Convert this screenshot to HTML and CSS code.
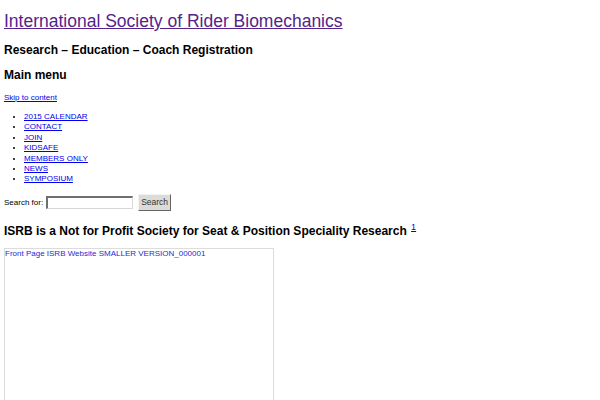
FILE: index.html
```html
<!DOCTYPE html>
<html lang="en">
<head>
  <meta charset="UTF-8">
  <title>International Society of Rider Biomechanics</title>
  <link rel="stylesheet" href="styles.css">
</head>
<body>
  <div class="site-title"><a href="#">International Society of Rider Biomechanics</a></div>
  <h2 class="tagline">Research – Education – Coach Registration</h2>

  <h2 class="menu-title">Main menu</h2>
  <div class="skip"><a href="#">Skip to content</a></div>

  <ul class="menu">
    <li><a href="#">2015 CALENDAR</a></li>
    <li><a href="#">CONTACT</a></li>
    <li><a href="#">JOIN</a></li>
    <li><a href="#">KIDSAFE</a></li>
    <li><a href="#">MEMBERS ONLY</a></li>
    <li><a href="#">NEWS</a></li>
    <li><a href="#">SYMPOSIUM</a></li>
  </ul>

  <form class="search">
    <label for="s">Search for:</label>
    <input type="text" id="s">
    <button type="submit">Search</button>
  </form>

  <h2 class="post-title">ISRB is a Not for Profit Society for Seat &amp; Position Speciality Research <sup><a href="#">1</a></sup></h2>

  <div class="frame">
    <a href="#">Front Page ISRB Website SMALLER VERSION_000001</a>
  </div>
</body>
</html>
```

FILE: styles.css
```css
body { font-family: "Liberation Sans", Arial, sans-serif; margin: 0; padding: 4px; color: #000; }
a { color: #0000ee; }
.site-title { font-size: 17.5px; line-height: 20px; margin-top: 7px; }
.site-title a { color: #55238c; }
.tagline { font-size: 12px; line-height: 16px; margin: 11px 0 0; }
.menu-title { font-size: 12px; line-height: 16px; margin: 9px 0 0; }
.skip { font-size: 8px; line-height: 10px; margin-top: 10px; }
.menu { font-size: 8px; line-height: 10.4px; margin: 9px 0 0; padding-left: 20px; }
.search { font-size: 8px; margin-top: 9px; display: flex; align-items: center; }
.search input { box-sizing: border-box; width: 87px; height: 13px; margin: 0 5px 0 3px; padding: 0 2px; font-size: 8px; border-style: solid; border-width: 2px 1px 1px 2px; border-color: #6f6f6f #d8d8d8 #d8d8d8 #6f6f6f; background: #fff; }
.search button { font-family: inherit; font-size: 8.5px; line-height: 11px; padding: 2px 2px; margin: 0; background: #dddbd6; border: 1px solid; border-color: #f4f4f4 #666 #666 #f4f4f4; color: #333; }
.post-title { font-size: 12px; line-height: 16px; margin: 12px 0 0; }
.post-title sup { font-size: 9px; font-weight: normal; line-height: 0; margin-left: 1px; }
.frame { width: 268px; height: 160px; margin-top: 9px; border: 1px solid #dcdcdc; font-size: 8px; line-height: 10px; }
.frame a { display: block; text-decoration: none; color: #2a2ad6; }
```
